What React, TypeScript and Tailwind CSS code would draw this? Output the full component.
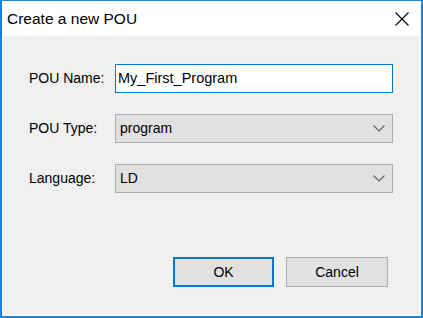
import React from "react";

function Chevron() {
  return (
    <svg width="12" height="7" viewBox="0 0 12 7" className="shrink-0">
      <path d="M0.5 0.5 L6 6 L11.5 0.5" fill="none" stroke="#606060" strokeWidth="1.1" />
    </svg>
  );
}

function CloseIcon() {
  return (
    <svg width="14" height="14" viewBox="0 0 14 14">
      <path d="M0.5 0.5 L13.5 13.5 M13.5 0.5 L0.5 13.5" stroke="#000" strokeWidth="1.1" fill="none" />
    </svg>
  );
}

function Row({ label, children }: { label: string; children: React.ReactNode }) {
  return (
    <div className="flex items-center h-[29px]">
      <div className="w-[86px] pl-[26px] box-content text-[14px] text-black whitespace-nowrap">{label}</div>
      <div className="w-[278px] h-full">{children}</div>
    </div>
  );
}

function Select({ value }: { value: string }) {
  return (
    <div className="h-full w-full bg-[#e1e1e1] border border-[#adadad] flex items-center justify-between pl-[4px] pr-[7px] text-[14px] text-black">
      <span>{value}</span>
      <Chevron />
    </div>
  );
}

export default function App() {
  return (
    <div
      className="w-[423px] h-[318px] flex flex-col border-t border-l-2 border-r-2 border-b-2 border-[#1c83d8] bg-white overflow-hidden"
      style={{ fontFamily: '"Liberation Sans", Arial, sans-serif' }}
    >
      <div className="h-[35px] shrink-0 bg-white flex items-center justify-between pl-[5px] pr-[12px]">
        <span className="text-[15.5px] text-black">Create a new POU</span>
        <CloseIcon />
      </div>
      <div className="flex-1 mx-[1px] mb-[1px] bg-[#f0f0f0] flex flex-col pt-[28px]">
        <div className="flex flex-col gap-[21px]">
          <Row label="POU Name:">
            <div className="h-full w-full bg-white border border-[#0078d7] flex items-center pl-[2px] text-[14.5px] text-black">
              My_First_Program
            </div>
          </Row>
          <Row label="POU Type:">
            <Select value="program" />
          </Row>
          <Row label="Language:">
            <Select value="LD" />
          </Row>
        </div>
        <div className="flex justify-end gap-[12px] mt-[64px] pr-[32px]">
          <div className="w-[101px] h-[30px] bg-[#e1e1e1] border-2 border-[#0078d7] flex items-center justify-center text-[14px] text-black">
            OK
          </div>
          <div className="w-[102px] h-[30px] bg-[#e1e1e1] border border-[#adadad] flex items-center justify-center text-[14px] text-black">
            Cancel
          </div>
        </div>
      </div>
    </div>
  );
}
